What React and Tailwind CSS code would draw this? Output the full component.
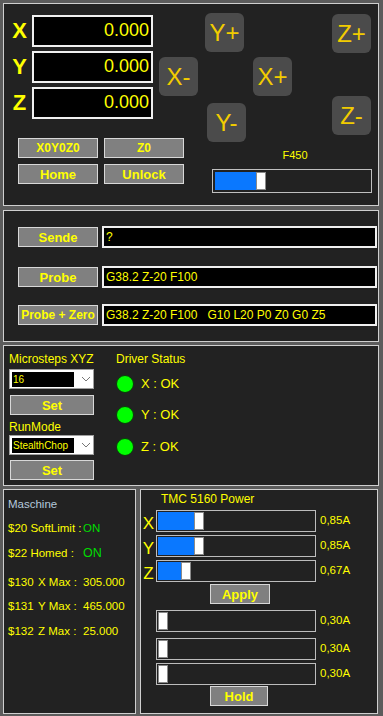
import React from 'react';

const font = { fontFamily: '"Liberation Sans", Arial, sans-serif' };

function Btn({ children, className = '' }) {
  return (
    <div
      className={`h-[20px] bg-[#808080] border border-[#d8d8d8] flex items-center justify-center text-[12px] font-bold text-[#ffff00] leading-none whitespace-nowrap ${className}`}
    >
      {children}
    </div>
  );
}

function Jog({ label, className = '' }) {
  return (
    <div
      className={`w-[39px] h-[39px] rounded-[6px] bg-[#4b4b4b] flex items-center justify-center text-[24px] text-[#f2cc00] leading-none ${className}`}
    >
      {label}
    </div>
  );
}

function Track({ fill, thumb = 10 }) {
  return (
    <div className="w-[160px] h-[22px] border border-[#bdbdbd] bg-[#222] p-[1px] flex">
      <div className="h-full bg-[#0a78ff]" style={{ width: fill }} />
      <div className="h-full bg-white border border-[#8a8a8a]" style={{ width: thumb }} />
    </div>
  );
}

function Combo({ value }) {
  return (
    <div className="w-[85px] h-[20px] bg-white border border-[#a0a0a0] flex items-center pl-[2px]">
      <div className="w-[62px] h-[15px] bg-black text-[#ffff00] text-[10px] leading-[15px] pl-[1px]">{value}</div>
      <svg width="10" height="6" viewBox="0 0 10 6" className="ml-[7px]">
        <path d="M1 1 L5 5 L9 1" fill="none" stroke="#777" strokeWidth="1" />
      </svg>
    </div>
  );
}

export default function App() {
  return (
    <div style={font} className="w-[383px] h-[716px] bg-[#5c5c5c] pt-[3px] pl-[3px] overflow-hidden">
      {/* panel 1: position + jog */}
      <div className="w-[376px] h-[203px] border border-[#cfcfcf] bg-[#222] flex flex-col">
        <div className="flex h-[131px]">
          <div className="flex flex-col gap-[3px] pt-[10px] pl-[3px]">
            {['X', 'Y', 'Z'].map((a) => (
              <div key={a} className="flex items-center">
                <span className="w-[25px] text-center text-[22px] font-bold text-[#ffff00]">{a}</span>
                <div className="w-[121px] h-[32px] bg-black border-2 border-[#f0f0f0] flex items-center justify-end pr-[2px] text-[18px] text-[#ffff00]">
                  0.000
                </div>
              </div>
            ))}
          </div>
          <div className="ml-[6px] pt-[9px] grid grid-cols-[46px_48px_79px_40px] grid-rows-[44px_39px_39px]">
            <div />
            <Jog label="Y+" />
            <div />
            <Jog label="Z+" className="mt-[1px]" />
            <Jog label="X-" />
            <div />
            <Jog label="X+" />
            <div />
            <div />
            <Jog label="Y-" className="mt-[7px] ml-[2px]" />
            <div />
            <Jog label="Z-" />
          </div>
        </div>
        <div className="flex">
          <div className="flex flex-col gap-[6px] pl-[14px] pt-[3px]">
            <div className="flex gap-[6px]">
              <Btn className="w-[80px]">X0Y0Z0</Btn>
              <Btn className="w-[80px]">Z0</Btn>
            </div>
            <div className="flex gap-[6px]">
              <Btn className="w-[80px] text-[13px]">Home</Btn>
              <Btn className="w-[80px] text-[13px]">Unlock</Btn>
            </div>
          </div>
          <div className="ml-[28px] pt-[13px] flex flex-col">
            <div className="text-center pl-[6px] text-[11px] leading-[14px] text-[#ffff00]">F450</div>
            <div className="mt-[7px] w-[160px] h-[24px] border border-[#c0c0c0] bg-[#222] p-[2px] flex">
              <div className="h-full w-[41px] bg-[#0a78ff]" />
              <div className="h-full w-[10px] bg-white border border-[#8a8a8a]" />
            </div>
          </div>
        </div>
      </div>

      {/* panel 2: commands */}
      <div className="mt-[4px] w-[376px] h-[132px] border border-[#cfcfcf] bg-[#222] pt-[15px] pl-[14px] flex flex-col">
        {[
          ['Sende', '?', 'mt-0'],
          ['Probe', 'G38.2 Z-20 F100', 'mt-[18px]'],
          ['Probe + Zero', 'G38.2 Z-20 F100   G10 L20 P0 Z0 G0 Z5', 'mt-[16px]'],
        ].map(([b, v, m]) => (
          <div key={b} className={`flex items-center gap-[4px] h-[22px] ${m}`}>
            <Btn className={`w-[80px] ${b === 'Probe + Zero' ? '' : 'text-[13px]'}`}>{b}</Btn>
            <div className="w-[275px] h-[22px] bg-black border-2 border-[#f0f0f0] flex items-center pl-[2px] text-[12px] text-[#ffff00] whitespace-pre">
              {v}
            </div>
          </div>
        ))}
      </div>

      {/* panel 3: drivers */}
      <div className="mt-[3px] w-[376px] h-[141px] border border-[#cfcfcf] bg-[#222] flex pt-[6px] pl-[5px]">
        <div className="flex flex-col w-[85px]">
          <div className="text-[12px] leading-[15px] text-[#ffff00] whitespace-nowrap">Microsteps XYZ</div>
          <div className="mt-[2px]"><Combo value="16" /></div>
          <Btn className="mt-[6px] ml-[1px] w-[84px] text-[13px]">Set</Btn>
          <div className="mt-[5px] text-[12px] leading-[15px] text-[#ffff00]">RunMode</div>
          <div><Combo value="StealthChop" /></div>
          <Btn className="mt-[5px] ml-[1px] w-[84px] text-[13px]">Set</Btn>
        </div>
        <div className="ml-[22px] flex flex-col">
          <div className="text-[12px] leading-[15px] text-[#ffff00]">Driver Status</div>
          {['X', 'Y', 'Z'].map((a, i) => (
            <div key={a} className={`flex items-center h-[18px] ${i === 0 ? 'mt-[8px]' : i === 1 ? 'mt-[13px]' : 'mt-[14px]'}`}>
              <div className="w-[18px] h-[18px] rounded-full bg-[#00ff00] border border-[#0a3a0a]" />
              <span className="ml-[7px] text-[13px] text-[#ffff00]">{a} : OK</span>
            </div>
          ))}
        </div>
      </div>

      {/* bottom panels */}
      <div className="mt-[3px] flex gap-[4px]">
        <div className="w-[133px] h-[225px] border border-[#cfcfcf] bg-[#222] pl-[4px] pt-[7px] text-[11.5px] leading-[15px] text-[#ffff00] whitespace-nowrap">
          <div className="text-[#b4c8dc]">Maschine</div>
          <div className="mt-[9px] flex">
            <span className="w-[75px] shrink-0">$20 SoftLimit :</span>
            <span className="text-[#00dd00]">ON</span>
          </div>
          <div className="mt-[10px] flex">
            <span className="w-[75px] shrink-0">$22 Homed :</span>
            <span className="text-[#00dd00] text-[12.5px]">ON</span>
          </div>
          {[
            ['$130', 'X Max :', '305.000', 'mt-[14px]'],
            ['$131', 'Y Max :', '465.000', 'mt-[9px]'],
            ['$132', 'Z Max :', '25.000', 'mt-[10px]'],
          ].map(([n, l, v, m]) => (
            <div key={n} className={`flex ${m}`}>
              <span className="w-[30px] shrink-0">{n}</span>
              <span className="w-[45px] shrink-0">{l}</span>
              <span>{v}</span>
            </div>
          ))}
        </div>

        <div className="w-[238px] h-[225px] border border-[#cfcfcf] bg-[#222] pt-[2px] flex flex-col">
          <div className="pl-[20px] text-[12px] leading-[15px] text-[#ffff00]">TMC 5160 Power</div>
          <div className="mt-[3px] flex flex-col gap-[3px]">
            {[
              ['X', 36, '0,85A'],
              ['Y', 36, '0,85A'],
              ['Z', 23, '0,67A'],
            ].map(([a, f, v]) => (
              <div key={a} className="flex items-center">
                <span className="w-[15px] text-center text-[17px] leading-none pt-[4px] text-[#ffff00]">{a}</span>
                <Track fill={f} />
                <span className="ml-[4px] text-[11.5px] text-[#ffff00]">{v}</span>
              </div>
            ))}
          </div>
          <Btn className="mt-[2px] ml-[69px] w-[60px] text-[13px]">Apply</Btn>
          {['mt-[6px]', 'mt-[6px]', 'mt-[3px]'].map((m, i) => (
            <div key={i} className={`flex items-center pl-[15px] ${m}`}>
              <Track fill={0} />
              <span className="ml-[4px] text-[11.5px] text-[#ffff00]">0,30A</span>
            </div>
          ))}
          <Btn className="mt-[1px] ml-[69px] w-[58px] text-[13px]">Hold</Btn>
        </div>
      </div>
    </div>
  );
}
